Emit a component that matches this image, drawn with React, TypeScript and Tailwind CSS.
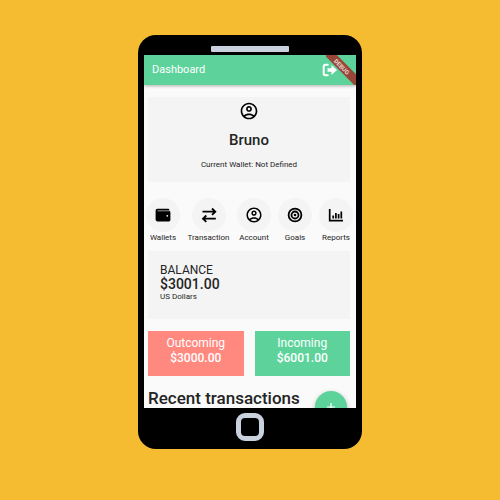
import React from "react";

function AccountIcon({ size }: { size: string }) {
  return (
    <svg viewBox="0 0 24 24" className={size} fill="currentColor" aria-hidden="true">
      <path d="M12 2C6.48 2 2 6.48 2 12s4.48 10 10 10 10-4.48 10-10S17.52 2 12 2zM7.35 18.5C8.66 17.56 10.26 17 12 17s3.34.56 4.65 1.5C15.34 19.44 13.74 20 12 20s-3.34-.56-4.65-1.5zm10.79-1.38C16.45 15.8 14.32 15 12 15s-4.45.8-6.14 2.12C4.7 15.73 4 13.95 4 12c0-4.42 3.58-8 8-8s8 3.58 8 8c0 1.95-.7 3.73-1.86 5.12zM12 6c-1.93 0-3.5 1.57-3.5 3.5S10.07 13 12 13s3.5-1.57 3.5-3.5S13.93 6 12 6zm0 5c-.83 0-1.5-.67-1.5-1.5S11.17 8 12 8s1.5.67 1.5 1.5S12.83 11 12 11z" />
    </svg>
  );
}

function WalletIcon() {
  return (
    <svg viewBox="0 0 16 16" className="size-4" aria-hidden="true">
      <path fill="currentColor" d="M2.6 1.7h10.2c.9 0 1.500.500 1.500 1.300v1.100c.6.100 1.100.600 1.100 1.200v7.800c0 .8-.6 1.400-1.400 1.400H2.500c-1.100 0-1.900-.8-1.900-1.900V3.700c0-1.200.8-2 2-2z" />
      <path stroke="#c4c4c4" strokeWidth=".8" d="M2.500 3.800h11.800" />
      <circle cx="12.300" cy="8.800" r=".9" fill="#f4f4f4" />
    </svg>
  );
}

function TransferIcon() {
  return (
    <svg viewBox="0 0 16 16" className="size-4" fill="none" stroke="currentColor" strokeWidth="1.800" aria-hidden="true">
      <path d="M1.500 4.700h13M11 1.500l3.300 3.200L11 7.900M14.800 11.700h-13M5.300 8.500L2 11.700l3.300 3.200" />
    </svg>
  );
}

function TargetIcon() {
  return (
    <svg viewBox="0 0 16 16" className="size-4" fill="none" stroke="currentColor" strokeWidth="1.800" aria-hidden="true">
      <circle cx="8" cy="8" r="6.400" />
      <circle cx="8" cy="8" r="3.500" />
      <circle cx="8" cy="8" r="1.300" fill="currentColor" stroke="none" />
    </svg>
  );
}

function ChartIcon() {
  return (
    <svg viewBox="0 0 16 16" className="size-4" fill="none" stroke="currentColor" strokeWidth="1.700" aria-hidden="true">
      <path d="M1.700 2v11.700H15" />
      <path d="M5.200 11.500V8.500M7.900 11.500V6M10.600 11.500V7M13.300 11.500V4.500" />
    </svg>
  );
}

const actions = [
  { label: "Wallets", icon: <WalletIcon /> },
  { label: "Transaction", icon: <TransferIcon /> },
  { label: "Account", icon: <AccountIcon size="size-[18px]" /> },
  { label: "Goals", icon: <TargetIcon /> },
  { label: "Reports", icon: <ChartIcon /> },
];

function AppBar() {
  return (
    <header className="relative z-10 flex h-[30px] items-center justify-between bg-[#5dd39b] pr-[18px] pl-2 text-white shadow-[0_1px_3px_rgba(0,0,0,0.3)]">
      <h1 className="text-[11px] leading-4">Dashboard</h1>
      <button type="button" aria-label="Sign out">
        <svg viewBox="0 0 16 16" className="size-4" aria-hidden="true">
          <path d="M5.800 2.700H3.500C2.400 2.700 1.700 3.400 1.700 4.500v7c0 1.100.700 1.800 1.800 1.800h2.300" fill="none" stroke="currentColor" strokeWidth="2" strokeLinecap="round" />
          <path d="M5.500 6.300h4V3L15 8l-5.500 5V9.700h-4z" fill="currentColor" />
        </svg>
      </button>
      <div className="pointer-events-none absolute top-0 right-0 size-[30px] overflow-hidden">
        <div className="absolute top-[7px] -right-[13px] h-[9px] w-[54px] rotate-45 bg-[#984638] text-center text-[6px] leading-[9px] font-bold text-[#e8d5d2]">DEBUG</div>
      </div>
    </header>
  );
}

export default function App() {
  return (
    <div className="flex min-h-screen items-start justify-center bg-[#f5bc32] pt-[35px] pb-12 font-[Roboto,'Liberation_Sans',sans-serif] text-[#242424]">
      <div className="flex w-full max-w-56 flex-col items-center rounded-[18px] bg-black px-1.5 pt-[11px] pb-2">
        <div className="h-1.5 w-[78px] rounded-[1px] bg-[#c9d1de]" />
        <main className="relative mt-[3px] h-[353px] w-full overflow-hidden bg-[#fafafa]">
          <AppBar />
          <div className="flex flex-col pr-1.5 pl-1">
            <section className="mt-3 flex flex-col items-center bg-[#f4f4f4] pt-1 pb-[11px] text-black">
              <AccountIcon size="size-5" />
              <h2 className="mt-[9px] text-[15px] leading-5 font-medium text-[#242424]">Bruno</h2>
              <p className="mt-2 text-[8px] leading-[13px] text-[#242424]">Current Wallet: Not Defined</p>
            </section>
            <nav className="-mr-0.5 mt-4 -ml-px flex justify-between">
              {actions.map(({ label, icon }) => (
                <button key={label} type="button" className="flex w-8 flex-col items-center gap-px text-[8px] leading-[10px] nth-2:w-[41px]">
                  <span className="flex size-[34px] items-center justify-center rounded-full bg-[#f4f4f4] text-black">{icon}</span>
                  {label}
                </button>
              ))}
            </nav>
            <section className="mt-2 h-[68px] bg-[#f4f4f4] px-3 pt-3">
              <h2 className="text-xs leading-[14px]">BALANCE</h2>
              <p className="text-sm leading-[14px] font-medium">$3001.00</p>
              <p className="text-[8px] leading-3">US Dollars</p>
            </section>
            <div className="mt-3 grid grid-cols-2 gap-[11px] text-center text-xs leading-[15px] text-white">
              <section className="h-[45px] bg-[#ff897f] pt-[5px]">
                <h3>Outcoming</h3>
                <p className="font-medium">$3000.00</p>
              </section>
              <section className="h-[45px] bg-[#5dd39b] pt-[5px]">
                <h3>Incoming</h3>
                <p className="font-medium">$6001.00</p>
              </section>
            </div>
            <h2 className="mt-3 text-[17px] leading-5 font-medium">Recent transactions</h2>
          </div>
          <button type="button" aria-label="Add transaction" className="absolute right-[9px] -bottom-[15px] flex size-8 items-center justify-center rounded-full bg-[#5dd39b] text-white shadow-[0_2px_5px_rgba(0,0,0,0.3)]">
            <svg viewBox="0 0 10 10" className="size-2.5" stroke="currentColor" strokeWidth="1.200" aria-hidden="true">
              <path d="M5 1v8M1 5h8" />
            </svg>
          </button>
        </main>
        <button type="button" aria-label="Home" className="mt-[5px] size-7 rounded-[9px] border-[5px] border-[#c9d1de] bg-black" />
      </div>
    </div>
  );
}
